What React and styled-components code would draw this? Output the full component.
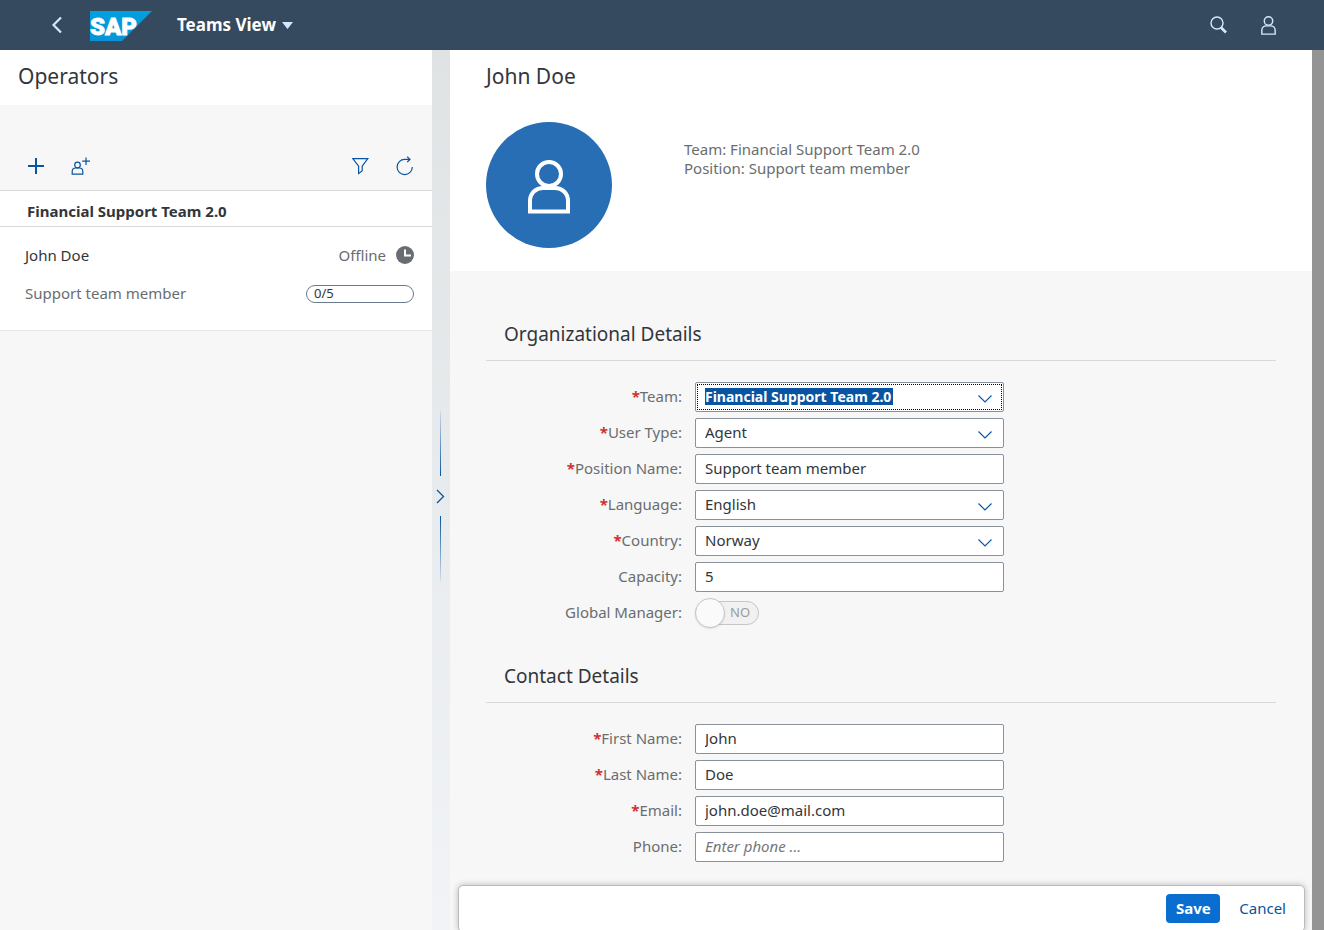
import React, { useState } from 'react'
import styled, { createGlobalStyle } from 'styled-components'

const organizationFields = [
	{ id: 'team', label: 'Team', type: 'select', required: true, value: 'Financial Support Team 2.0', active: true },
	{ id: 'userType', label: 'User Type', type: 'select', required: true, value: 'Agent' },
	{ id: 'position', label: 'Position Name', type: 'text', required: true, value: 'Support team member' },
	{ id: 'language', label: 'Language', type: 'select', required: true, value: 'English' },
	{ id: 'country', label: 'Country', type: 'select', required: true, value: 'Norway' },
	{ id: 'capacity', label: 'Capacity', type: 'text', value: '5' },
	{ id: 'manager', label: 'Global Manager', type: 'switch' },
]

const contactFields = [
	{ id: 'firstName', label: 'First Name', type: 'text', required: true, value: 'John' },
	{ id: 'lastName', label: 'Last Name', type: 'text', required: true, value: 'Doe' },
	{ id: 'email', label: 'Email', type: 'email', required: true, value: 'john.doe@mail.com' },
	{ id: 'phone', label: 'Phone', type: 'tel', value: '', placeholder: 'Enter phone ...' },
]

const PersonIcon = ({ width, height, stroke }) => (
	<svg width={width} height={height} viewBox='0 0 42 54' fill='none' stroke='currentColor' strokeWidth={stroke}>
		<circle cx='21' cy='14' r='12' />
		<path d='M2 51.5V41C2 33 8 28 15 28H27C34 28 40 33 40 41V51.5Z' />
	</svg>
)

const Logo = () => (
	<svg width='62' height='30' viewBox='0 0 62 30' role='img' aria-label='SAP'>
		<defs>
			<linearGradient id='logoFill' x1='0' y1='0' x2='0' y2='1'>
				<stop offset='0' stopColor='#00a0e0' />
				<stop offset='1' stopColor='#0993d8' />
			</linearGradient>
		</defs>
		<path d='M0 0H62L32 30H0Z' fill='url(#logoFill)' />
		<LogoText x='0' y='24'>SAP</LogoText>
	</svg>
)

const Field = ({ field }) => {
	const [value, setValue] = useState(field.value)
	const [checked, setChecked] = useState(false)

	const onChange = event => {
		setValue(event.currentTarget.value)
	}

	return (
		<FieldRow>
			<FieldLabel htmlFor={field.id}>
				{field.required && <Asterisk>*</Asterisk>}
				{field.label}:
			</FieldLabel>
			{field.type === 'select' && (
				<SelectWrapper>
					<Select id={field.id} value={value} onChange={onChange} $active={field.active}>
						<option>{field.value}</option>
					</Select>
					<svg width='16' height='10' viewBox='0 0 16 10' fill='none' stroke='#0854a0' strokeWidth='1.1'>
						<path d='M1.5 1.5L8 8L14.5 1.5' />
					</svg>
				</SelectWrapper>
			)}
			{field.type === 'switch' && (
				<Switch>
					<SwitchInput
						id={field.id}
						type='checkbox'
						checked={checked}
						onChange={() => setChecked(!checked)}
					/>
					<SwitchText>{checked ? 'YES' : 'NO'}</SwitchText>
				</Switch>
			)}
			{field.type !== 'select' && field.type !== 'switch' && (
				<TextField
					id={field.id}
					type={field.type}
					value={value}
					placeholder={field.placeholder}
					onChange={onChange}
				/>
			)}
		</FieldRow>
	)
}

const App = () => (
	<>
		<GlobalStyle />
		<Page>
			<Shell>
				<IconButton aria-label='Back'>
					<svg width='12' height='18' viewBox='0 0 12 18' fill='none' stroke='currentColor' strokeWidth='2.2'>
						<path d='M10 1.5L2.5 9L10 16.5' />
					</svg>
				</IconButton>
				<Logo />
				<ShellTitle>
					Teams View
					<svg width='11' height='7' viewBox='0 0 11 7' fill='#d1e8ff'>
						<path d='M0 0H11L5.5 7Z' />
					</svg>
				</ShellTitle>
				<ShellActions>
					<IconButton aria-label='Search'>
						<svg width='18' height='18' viewBox='0 0 18 18' fill='none' stroke='currentColor'>
							<circle cx='7' cy='7' r='6' strokeWidth='1.4' />
							<path d='M11 11.5L16 16.5' strokeWidth='2.6' />
						</svg>
					</IconButton>
					<IconButton aria-label='Profile'>
						<PersonIcon width={15} height={19} stroke={4} />
					</IconButton>
				</ShellActions>
			</Shell>
			<Workspace>
				<Master>
					<MasterTitle>Operators</MasterTitle>
					<Toolbar>
						<ToolGroup>
							<IconButton aria-label='Add team'>
								<svg width='18' height='18' viewBox='0 0 18 18' stroke='currentColor' strokeWidth='2'>
									<path d='M9 1V17M1 9H17' />
								</svg>
							</IconButton>
							<IconButton aria-label='Add operator'>
								<svg width='20' height='18' viewBox='0 0 20 18' fill='none' stroke='currentColor' strokeWidth='1.2'>
									<circle cx='6.5' cy='8' r='2.8' />
									<path d='M1.2 17.2V14.5C1.2 12.2 2.8 11 4.6 11H8.4C10.2 11 11.8 12.2 11.8 14.5V17.2Z' />
									<path d='M15 0.5V8M11.2 4.2H19' />
								</svg>
							</IconButton>
						</ToolGroup>
						<ToolGroup>
							<IconButton aria-label='Filter'>
								<svg width='18' height='18' viewBox='0 0 18 18' fill='none' stroke='currentColor' strokeWidth='1.2'>
									<path d='M0.8 1.6H15.8L10.2 9.2V13.8L6.6 16.6V9.2Z' />
								</svg>
							</IconButton>
							<IconButton aria-label='Refresh'>
								<svg width='18' height='20' viewBox='0 0 18 20' fill='none' stroke='currentColor' strokeWidth='1.2'>
									<path d='M14 3.4H8.7A7.6 7.6 0 1 0 16.3 11' />
									<path d='M11.2 0.8L14 3.4L11.2 6' />
								</svg>
							</IconButton>
						</ToolGroup>
					</Toolbar>
					<TeamHeader>Financial Support Team 2.0</TeamHeader>
					<Operator>
						<OperatorRow>
							<OperatorName>John Doe</OperatorName>
							<Status>
								Offline
								<svg width='18' height='18' viewBox='0 0 18 18'>
									<circle cx='9' cy='9' r='9' fill='#6a6d70' />
									<path d='M9 3.5V9.5H15' fill='none' stroke='#fff' strokeWidth='2' />
								</svg>
							</Status>
						</OperatorRow>
						<OperatorRow>
							Support team member
							<Load>0/5</Load>
						</OperatorRow>
					</Operator>
				</Master>
				<Splitter>
					<SplitterLine $direction='to bottom' />
					<IconButton aria-label='Collapse panel'>
						<svg width='9' height='15' viewBox='0 0 9 15' fill='none' stroke='currentColor' strokeWidth='1.3'>
							<path d='M1 1L7.5 7.5L1 14' />
						</svg>
					</IconButton>
					<SplitterLine $direction='to top' />
				</Splitter>
				<Detail>
					<Profile>
						<ProfileName>John Doe</ProfileName>
						<ProfileInfo>
							<Avatar>
								<PersonIcon width={42} height={54} stroke={4} />
							</Avatar>
							<div>
								<div>Team: Financial Support Team 2.0</div>
								<div>Position: Support team member</div>
							</div>
						</ProfileInfo>
					</Profile>
					<Form>
						<SectionTitle>Organizational Details</SectionTitle>
						<Fields>
							{organizationFields.map(field => <Field key={field.id} field={field} />)}
						</Fields>
						<SectionTitle>Contact Details</SectionTitle>
						<Fields>
							{contactFields.map(field => <Field key={field.id} field={field} />)}
						</Fields>
					</Form>
					<Footer>
						<FooterButton type='button' $primary>Save</FooterButton>
						<FooterButton type='button'>Cancel</FooterButton>
					</Footer>
				</Detail>
				<Rail />
			</Workspace>
		</Page>
	</>
)

export default App

const GlobalStyle = createGlobalStyle`
	*, *::before {
		box-sizing: border-box;
	}
	body {
		margin: 0;
		background: #f7f7f7;
		color: #32363a;
		font: 15px/19px 'Noto Sans', 'Open Sans', sans-serif;
	}
	button, input, select {
		font: inherit;
		color: inherit;
	}
`

const Page = styled.div`
	display: flex;
	flex-direction: column;
	min-height: 100vh;
`

const Shell = styled.header`
	display: flex;
	align-items: center;
	height: 50px;
	padding: 0 48px 0 50px;
	background: #354a5f;
	color: #d1e8ff;
	& > svg {
		margin: 2px 25px 0 27px;
	}
`

const LogoText = styled.text`
	font: 900 24px Roboto, sans-serif;
	fill: #fff;
	stroke: #fff;
	stroke-width: 0.8px;
`

const ShellTitle = styled.button`
	display: flex;
	align-items: center;
	gap: 6px;
	padding: 0;
	border: 0;
	background: none;
	color: #fff;
	font-size: 17px;
	font-weight: 700;
	line-height: 24px;
`

const ShellActions = styled.div`
	display: flex;
	gap: 33px;
	margin-left: auto;
`

const IconButton = styled.button`
	display: flex;
	align-items: center;
	justify-content: center;
	min-width: 13px;
	height: 20px;
	padding: 0;
	border: 0;
	background: none;
`

const Workspace = styled.div`
	display: grid;
	flex: 1;
	grid-template-columns: minmax(0, 216fr) 18px minmax(0, 431fr) 12px;
`

const Master = styled.aside`
	background: #f7f7f7;
`

const MasterTitle = styled.h1`
	margin: 0;
	padding: 12px 18px 15px;
	background: #fff;
	font-size: 21px;
	font-weight: 400;
	line-height: 28px;
`

const Toolbar = styled.div`
	display: flex;
	justify-content: space-between;
	padding: 51px 18px 14px 27px;
	border-bottom: 1px solid #d9d9d9;
	color: #0854a0;
	& button {
		color: #0854a0;
	}
`

const ToolGroup = styled.div`
	display: flex;
	gap: 26px;
`

const TeamHeader = styled.h2`
	margin: 0;
	padding: 11px 27px 5px;
	border-bottom: 1px solid #d9d9d9;
	background: #fff;
	font-size: 15px;
	font-weight: 700;
	line-height: 19px;
`

const Operator = styled.article`
	display: grid;
	gap: 19px;
	padding: 19px 18px 27px 25px;
	border-bottom: 1px solid #e5e5e5;
	background: #fff;
	color: #6a6d70;
`

const OperatorRow = styled.div`
	display: flex;
	align-items: center;
	justify-content: space-between;
`

const OperatorName = styled.span`
	color: #32363a;
`

const Status = styled.span`
	display: flex;
	gap: 10px;
`

const Load = styled.span`
	width: 108px;
	height: 18px;
	padding-left: 7px;
	border: 1px solid #6a7a8c;
	border-radius: 9px;
	color: #32363a;
	font-size: 13px;
	line-height: 15px;
`

const Splitter = styled.div`
	display: flex;
	flex-direction: column;
	align-items: center;
	justify-content: center;
	gap: 10px;
	padding: 10px 1px 0 0;
	background: linear-gradient(#dfe3e4, #f1f3f6);
	color: #0854a0;
`

const SplitterLine = styled.span`
	width: 1px;
	height: 65px;
	background: linear-gradient(${props => props.$direction}, rgba(8, 84, 160, 0.1), #0854a0);
`

const Detail = styled.main`
	display: flex;
	flex-direction: column;
	overflow: hidden;
`

const Profile = styled.section`
	padding: 12px 36px 23px;
	background: #fff;
	color: #6a6d70;
`

const ProfileName = styled.h2`
	margin: 0 0 32px;
	color: #32363a;
	font-size: 21px;
	font-weight: 400;
	line-height: 28px;
`

const ProfileInfo = styled.div`
	display: flex;
	gap: 72px;
	& > div:last-child {
		padding-top: 18px;
	}
`

const Avatar = styled.div`
	display: flex;
	align-items: center;
	justify-content: center;
	width: 126px;
	height: 126px;
	padding-top: 3px;
	border-radius: 50%;
	background: #286eb4;
	color: #fff;
`

const Form = styled.form`
	flex: 1;
	padding: 36px 36px 2px;
`

const SectionTitle = styled.h3`
	margin: 0;
	padding: 14px 18px 13px;
	border-bottom: 1px solid #d9d9d9;
	font-size: 19px;
	font-weight: 400;
	line-height: 26px;
`

const Fields = styled.div`
	display: grid;
	gap: 6px;
	padding: 21px 0;
`

const FieldRow = styled.div`
	display: grid;
	grid-template-columns: 196fr 309fr 259fr;
	column-gap: 13px;
	align-items: center;
	height: 30px;
`

const FieldLabel = styled.label`
	padding-bottom: 2px;
	color: #6a6d70;
	text-align: right;
	white-space: nowrap;
`

const Asterisk = styled.span`
	color: #d03232;
	font-weight: 700;
`

const TextField = styled.input`
	width: 100%;
	height: 30px;
	padding: 0 9px 2px;
	border: 1px solid #89919a;
	border-radius: 2px;
	background: #fff;
	&::placeholder {
		color: #74777a;
		font-style: italic;
	}
`

const SelectWrapper = styled.div`
	display: grid;
	align-items: center;
	& > * {
		grid-area: 1 / 1;
	}
	& > svg {
		justify-self: end;
		margin: 4px 11px 0 0;
		pointer-events: none;
	}
`

const Select = styled.select`
	width: 100%;
	height: 30px;
	padding: 0 9px 2px;
	border: 1px solid #89919a;
	border-radius: 2px;
	appearance: none;
	background: #fff;
	${props => props.$active && `
		outline: 1px dotted #000;
		outline-offset: -3px;
		background: linear-gradient(#0854a0, #0854a0) 9px 5px / 188px 17px no-repeat, #fff;
		color: #fff;
		font-size: 14px;
		font-weight: 700;
	`}
`

const Switch = styled.span`
	display: grid;
	align-items: center;
	justify-self: start;
	width: 64px;
	& > * {
		grid-area: 1 / 1;
	}
`

const SwitchInput = styled.input`
	display: flex;
	align-items: center;
	width: 64px;
	height: 24px;
	margin: 0;
	border: 1px solid #c4c6c8;
	border-radius: 12px;
	appearance: none;
	background: #f1f1f1;
	&::before {
		content: '';
		flex: none;
		width: 30px;
		height: 30px;
		margin-left: -1px;
		border: 1px solid #c4c6c8;
		border-radius: 50%;
		background: #fafafb;
		box-shadow: 0 1px 2px rgba(0, 0, 0, 0.1);
	}
	&:checked::before {
		margin-left: 33px;
	}
	&:checked + span {
		padding-left: 6px;
	}
`

const SwitchText = styled.span`
	padding: 0 0 2px 35px;
	color: #9a9c9e;
	font-size: 13px;
	pointer-events: none;
`

const Footer = styled.footer`
	display: flex;
	justify-content: flex-end;
	gap: 10px;
	margin: 0 7px 0 8px;
	padding: 8px 9px;
	border: 1px solid #bbb;
	border-radius: 5px;
	background: #fff;
	box-shadow: 0 0 6px rgba(0, 0, 0, 0.25);
`

const FooterButton = styled.button`
	min-width: 54px;
	height: 29px;
	padding: 0 9px;
	border: 0;
	border-radius: 4px;
	background: ${props => props.$primary ? '#0a6ed1' : 'none'};
	color: ${props => props.$primary ? '#fff' : '#0854a0'};
	font-weight: ${props => props.$primary ? 700 : 400};
`

const Rail = styled.div`
	background: #949494;
`
